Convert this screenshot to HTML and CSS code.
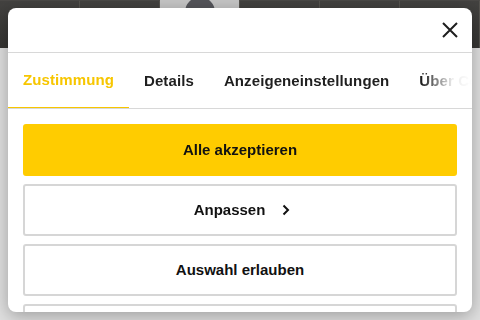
FILE: index.html
```html
<!DOCTYPE html>
<html lang="de">
<head>
<meta charset="utf-8">
<link rel="stylesheet" href="styles.css">
</head>
<body>
<div class="backdrop">
  <div class="tiles">
    <div class="tile"></div>
    <div class="tile"></div>
    <div class="tile tile-light"><span class="head"></span></div>
    <div class="tile"></div>
    <div class="tile"></div>
    <div class="tile"></div>
  </div>
  <div class="floor"></div>
</div>
<div class="modal">
  <div class="modal-head">
    <button class="close" aria-label="Schließen">
      <svg width="16" height="16" viewBox="0 0 16 16"><path d="M1 1 L15 15 M15 1 L1 15" stroke="#1e1e1e" stroke-width="2" fill="none"/></svg>
    </button>
  </div>
  <div class="tabs">
    <div class="tab active">Zustimmung</div>
    <div class="tab">Details</div>
    <div class="tab">Anzeigeneinstellungen</div>
    <div class="tab">Über Cookies</div>
    <div class="fade"></div>
  </div>
  <div class="content">
    <button class="btn btn-primary">Alle akzeptieren</button>
    <button class="btn btn-next">Anpassen
      <svg class="chev" width="8" height="12" viewBox="0 0 8 12"><path d="M1.5 1.5 L6 6 L1.5 10.5" stroke="#111" stroke-width="2" fill="none"/></svg>
    </button>
    <button class="btn">Auswahl erlauben</button>
    <button class="btn">Alle ablehnen</button>
  </div>
</div>
</body>
</html>
```
FILE: styles.css
```css
* { box-sizing: border-box; }
html, body { margin: 0; padding: 0; width: 480px; height: 320px; overflow: hidden; }
body { font-family: "Liberation Sans", Arial, sans-serif; background: #e2e2e2; }

.backdrop { display: flex; flex-direction: column; height: 320px; }
.tiles { display: flex; height: 48px; background: #3b3a39; }
.tile { width: 80px; height: 48px; border-right: 1px solid #55534f; border-top: 1px solid #4a4846; background: linear-gradient(#434240, #363533); position: relative; overflow: hidden; }
.tile-light { background: #c6c6c6; display: flex; justify-content: center; border-top: none; }
.head { display: block; width: 30px; height: 30px; border-radius: 50%; background: #55565b; margin-top: -3px; }
.floor { flex: 1; background: #e0e0e0; }

.modal {
  position: fixed; left: 8px; top: 8px; width: 464px; height: 304px;
  background: #fff; border-radius: 8px; overflow: hidden;
  box-shadow: 0 4px 18px rgba(0,0,0,0.3);
  display: flex; flex-direction: column;
}
.modal-head { height: 45px; border-bottom: 1px solid #d8d8d8; display: flex; justify-content: flex-end; align-items: center; padding-right: 14px; flex-shrink: 0; }
.close { border: 0; background: none; padding: 0; width: 16px; height: 16px; display: flex; margin-top: -1px; }

.tabs { position: relative; display: flex; height: 56px; border-bottom: 1px solid #d8d8d8; flex-shrink: 0; white-space: nowrap; }
.tab { padding: 0 15px 1px; display: flex; align-items: center; font-size: 15px; font-weight: bold; letter-spacing: 0.1px; color: #1f1f1f; flex-shrink: 0; }
.tab.active { color: #f7c600; border-bottom: 1px solid #f7c600; }
.fade { position: absolute; right: 0; top: 0; bottom: 0; width: 50px; background: linear-gradient(to right, rgba(255,255,255,0), rgba(255,255,255,0.9) 60%, #fff); }

.content { padding: 15px 15px 0; display: flex; flex-direction: column; gap: 8px; }
.btn {
  height: 52px; width: 100%; flex-shrink: 0;
  border: 2px solid #d6d6d6; border-radius: 3px; background: #fff;
  font-family: inherit; font-size: 15px; font-weight: bold; color: #111;
  display: flex; align-items: center; justify-content: center; gap: 17px;
  padding: 0 0 2px;
}
.btn-next { padding-left: 4px; }
.btn-primary { background: #ffcc00; border-color: #ffcc00; }
.chev { display: block; margin-top: 1px; }
```
